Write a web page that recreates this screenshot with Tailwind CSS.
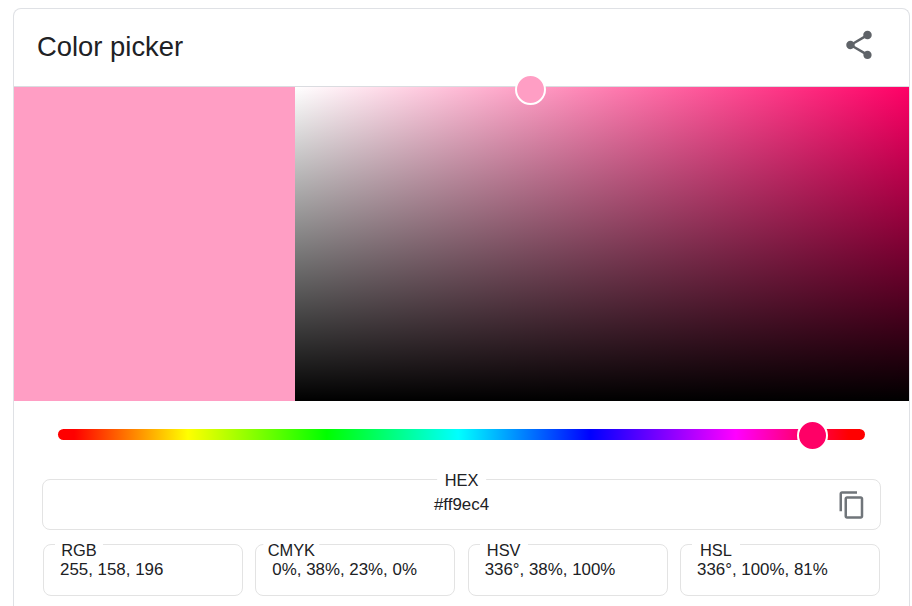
<!DOCTYPE html>
<html>
<head>
<meta charset="utf-8">
<script src="https://cdn.jsdelivr.net/npm/@tailwindcss/browser@4"></script>
</head>
<body class="bg-white overflow-hidden h-[606px] font-[family-name:Liberation_Sans,Arial,sans-serif] text-[#202124]">
<div class="ml-[13px] mt-2 w-[897px] h-[598px] border border-[#dfe1e5] border-b-0 rounded-t-lg">
  <header class="h-[78px] pb-[2px] border-b border-[#dadce0] flex items-center justify-between pl-[23px] pr-[33px]">
    <h1 class="text-[27.4px] leading-[30px] font-normal">Color picker</h1>
    <svg class="w-[34px] h-[34px] mb-[4px] fill-[#5f6368]" viewBox="0 0 24 24"><path d="M18 16.08c-.76 0-1.44.3-1.96.77L8.91 12.7c.05-.23.09-.46.09-.7s-.04-.47-.09-.7l7.05-4.11c.54.5 1.25.81 2.04.81 1.66 0 3-1.34 3-3s-1.34-3-3-3-3 1.34-3 3c0 .24.04.47.09.7L8.04 9.81C7.5 9.31 6.79 9 6 9c-1.66 0-3 1.34-3 3s1.34 3 3 3c.79 0 1.5-.31 2.04-.81l7.12 4.16c-.05.21-.08.43-.08.65 0 1.61 1.31 2.92 2.92 2.92 1.61 0 2.92-1.31 2.92-2.92s-1.31-2.92-2.92-2.92z"/></svg>
  </header>
  <section class="relative flex h-[314px]">
    <div class="w-[281px] bg-[#ff9ec4]"></div>
    <div class="flex-1 bg-[linear-gradient(to_bottom,transparent,#000),linear-gradient(to_right,#fff,#ff0066)]"></div>
    <div class="absolute left-[501px] top-[-13px] w-[31px] h-[31px] rounded-full bg-[#ff9ec4] border-2 border-white"></div>
  </section>
  <div class="relative mt-7 ml-[44px] w-[807px] h-[11px] rounded-full bg-[linear-gradient(to_right,#f00_2%,#ff0_16.1%,#0f0_33.3%,#0ff_49.6%,#00f_66%,#f0f_84%,#f00_98%)]">
    <div class="absolute left-[739px] top-[-9px] w-[31px] h-[31px] rounded-full bg-[#ff0066] border-2 border-white"></div>
  </div>
  <div class="relative mt-[39px] ml-7 w-[839px] h-[51px] border border-[#e3e3e3] rounded-lg text-center">
    <span class="absolute left-1/2 top-[-9px] -translate-x-1/2 bg-white px-2 text-[16.4px] leading-[18px]">HEX</span>
    <p class="mt-4 text-[16.9px] leading-[18px]">#ff9ec4</p>
    <svg class="absolute right-[13px] top-[10px] w-[30px] h-[30px] fill-[#70757a]" viewBox="0 0 24 24"><path d="M16 1H4c-1.1 0-2 .9-2 2v14h2V3h12V1zm3 4H8c-1.1 0-2 .9-2 2v14c0 1.1.9 2 2 2h11c1.1 0 2-.9 2-2V7c0-1.1-.9-2-2-2zm0 16H8V7h11v14z"/></svg>
  </div>
  <div class="mt-[14px] ml-[29px] w-[837px] flex justify-between">
    <div class="relative w-[200px] h-[52px] border border-[#e3e3e3] rounded-lg pl-4">
      <span class="absolute left-[35px] top-[-4px] -translate-x-1/2 min-w-[48px] bg-white px-1 text-center text-[16.4px] leading-[18px]">RGB</span>
      <p class="mt-4 text-[16.9px] leading-[18px]">255, 158, 196</p>
    </div>
    <div class="relative w-[200px] h-[52px] border border-[#e3e3e3] rounded-lg pl-4">
      <span class="absolute left-[35px] top-[-4px] -translate-x-1/2 min-w-[48px] bg-white px-1 text-center text-[16.4px] leading-[18px]">CMYK</span>
      <p class="mt-4 text-[16.9px] leading-[18px]">0%, 38%, 23%, 0%</p>
    </div>
    <div class="relative w-[200px] h-[52px] border border-[#e3e3e3] rounded-lg pl-4">
      <span class="absolute left-[35px] top-[-4px] -translate-x-1/2 min-w-[48px] bg-white px-1 text-center text-[16.4px] leading-[18px]">HSV</span>
      <p class="mt-4 text-[16.9px] leading-[18px]">336°, 38%, 100%</p>
    </div>
    <div class="relative w-[200px] h-[52px] border border-[#e3e3e3] rounded-lg pl-4">
      <span class="absolute left-[35px] top-[-4px] -translate-x-1/2 min-w-[48px] bg-white px-1 text-center text-[16.4px] leading-[18px]">HSL</span>
      <p class="mt-4 text-[16.9px] leading-[18px]">336°, 100%, 81%</p>
    </div>
  </div>
</div>
</body>
</html>
